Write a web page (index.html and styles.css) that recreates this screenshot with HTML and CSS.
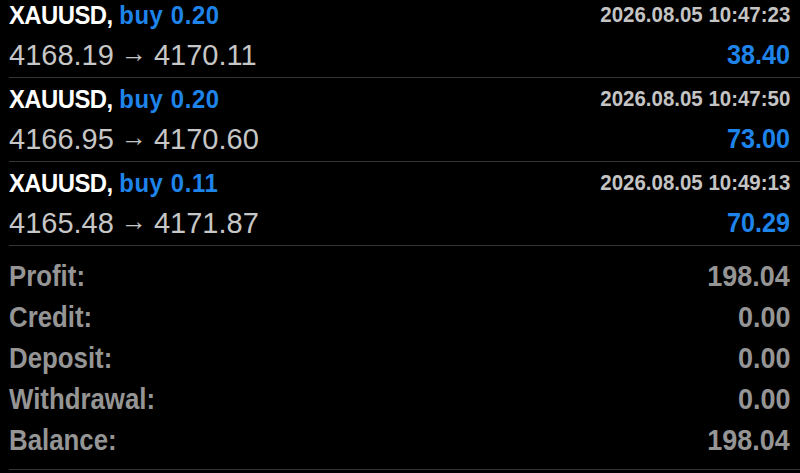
FILE: index.html
```html
<!DOCTYPE html>
<html>
<head>
<meta charset="utf-8">
<link rel="stylesheet" href="styles.css">
</head>
<body>
<div class="page">
  <div class="deals">
    <div class="deal">
      <div class="line1">
        <div class="title"><span class="sym">XAUUSD,</span> <span class="side">buy 0.20</span></div>
        <div class="date">2026.08.05 10:47:23</div>
      </div>
      <div class="line2">
        <div class="prices">4168.19 <span class="arrow">→</span> 4170.11</div>
        <div class="profit">38.40</div>
      </div>
    </div>
    <div class="deal">
      <div class="line1">
        <div class="title"><span class="sym">XAUUSD,</span> <span class="side">buy 0.20</span></div>
        <div class="date">2026.08.05 10:47:50</div>
      </div>
      <div class="line2">
        <div class="prices">4166.95 <span class="arrow">→</span> 4170.60</div>
        <div class="profit">73.00</div>
      </div>
    </div>
    <div class="deal">
      <div class="line1">
        <div class="title"><span class="sym">XAUUSD,</span> <span class="side">buy 0.11</span></div>
        <div class="date">2026.08.05 10:49:13</div>
      </div>
      <div class="line2">
        <div class="prices">4165.48 <span class="arrow">→</span> 4171.87</div>
        <div class="profit">70.29</div>
      </div>
    </div>
  </div>
  <div class="summary">
    <div class="srow"><span class="label">Profit:</span><span class="value">198.04</span></div>
    <div class="srow"><span class="label">Credit:</span><span class="value">0.00</span></div>
    <div class="srow"><span class="label">Deposit:</span><span class="value">0.00</span></div>
    <div class="srow"><span class="label">Withdrawal:</span><span class="value">0.00</span></div>
    <div class="srow"><span class="label">Balance:</span><span class="value">198.04</span></div>
  </div>
</div>
</body>
</html>
```
FILE: styles.css
```css
html, body {
  margin: 0;
  padding: 0;
  background: #000;
  height: 100%;
  overflow: hidden;
}
body {
  font-family: "Liberation Sans", Arial, sans-serif;
}
.page {
  margin-left: 9px;
}
.deals {
  margin-top: -6px;
}
.deal {
  padding: 2px 10px 5px 0;
  border-bottom: 1px solid #353535;
  height: 76px;
}
.line1, .line2 {
  display: flex;
  justify-content: space-between;
  align-items: flex-start;
  height: 38px;
}
.title {
  font-size: 26.5px;
  line-height: 38px;
  font-weight: bold;
  white-space: nowrap;
  transform: scaleX(0.9);
  transform-origin: 0 50%;
}
.sym {
  color: #fff;
  letter-spacing: -0.6px;
}
.side {
  color: #1f84ea;
  letter-spacing: 0.7px;
}
.date {
  font-size: 22px;
  line-height: 37px;
  font-weight: bold;
  color: #c4c4c4;
  white-space: nowrap;
  transform: scaleX(0.93);
  transform-origin: 100% 50%;
}
.prices {
  font-size: 29px;
  line-height: 38px;
  color: #c6c6c6;
  white-space: nowrap;
  word-spacing: -1px;
}
.arrow {
  font-size: 26px;
  vertical-align: 3px;
}
.profit {
  font-size: 28px;
  line-height: 38px;
  padding-top: 2px;
  font-weight: bold;
  color: #1f84ea;
  transform: scaleX(0.9);
  transform-origin: 100% 50%;
}
.summary {
  padding: 10px 10px 8px 0;
  border-bottom: 1px solid #353535;
}
.srow {
  display: flex;
  justify-content: space-between;
  font-size: 29px;
  line-height: 41px;
  font-weight: bold;
  color: #959595;
}
.label {
  transform: scaleX(0.89);
  transform-origin: 0 50%;
}
.value {
  transform: scaleX(0.93);
  transform-origin: 100% 50%;
}
```
